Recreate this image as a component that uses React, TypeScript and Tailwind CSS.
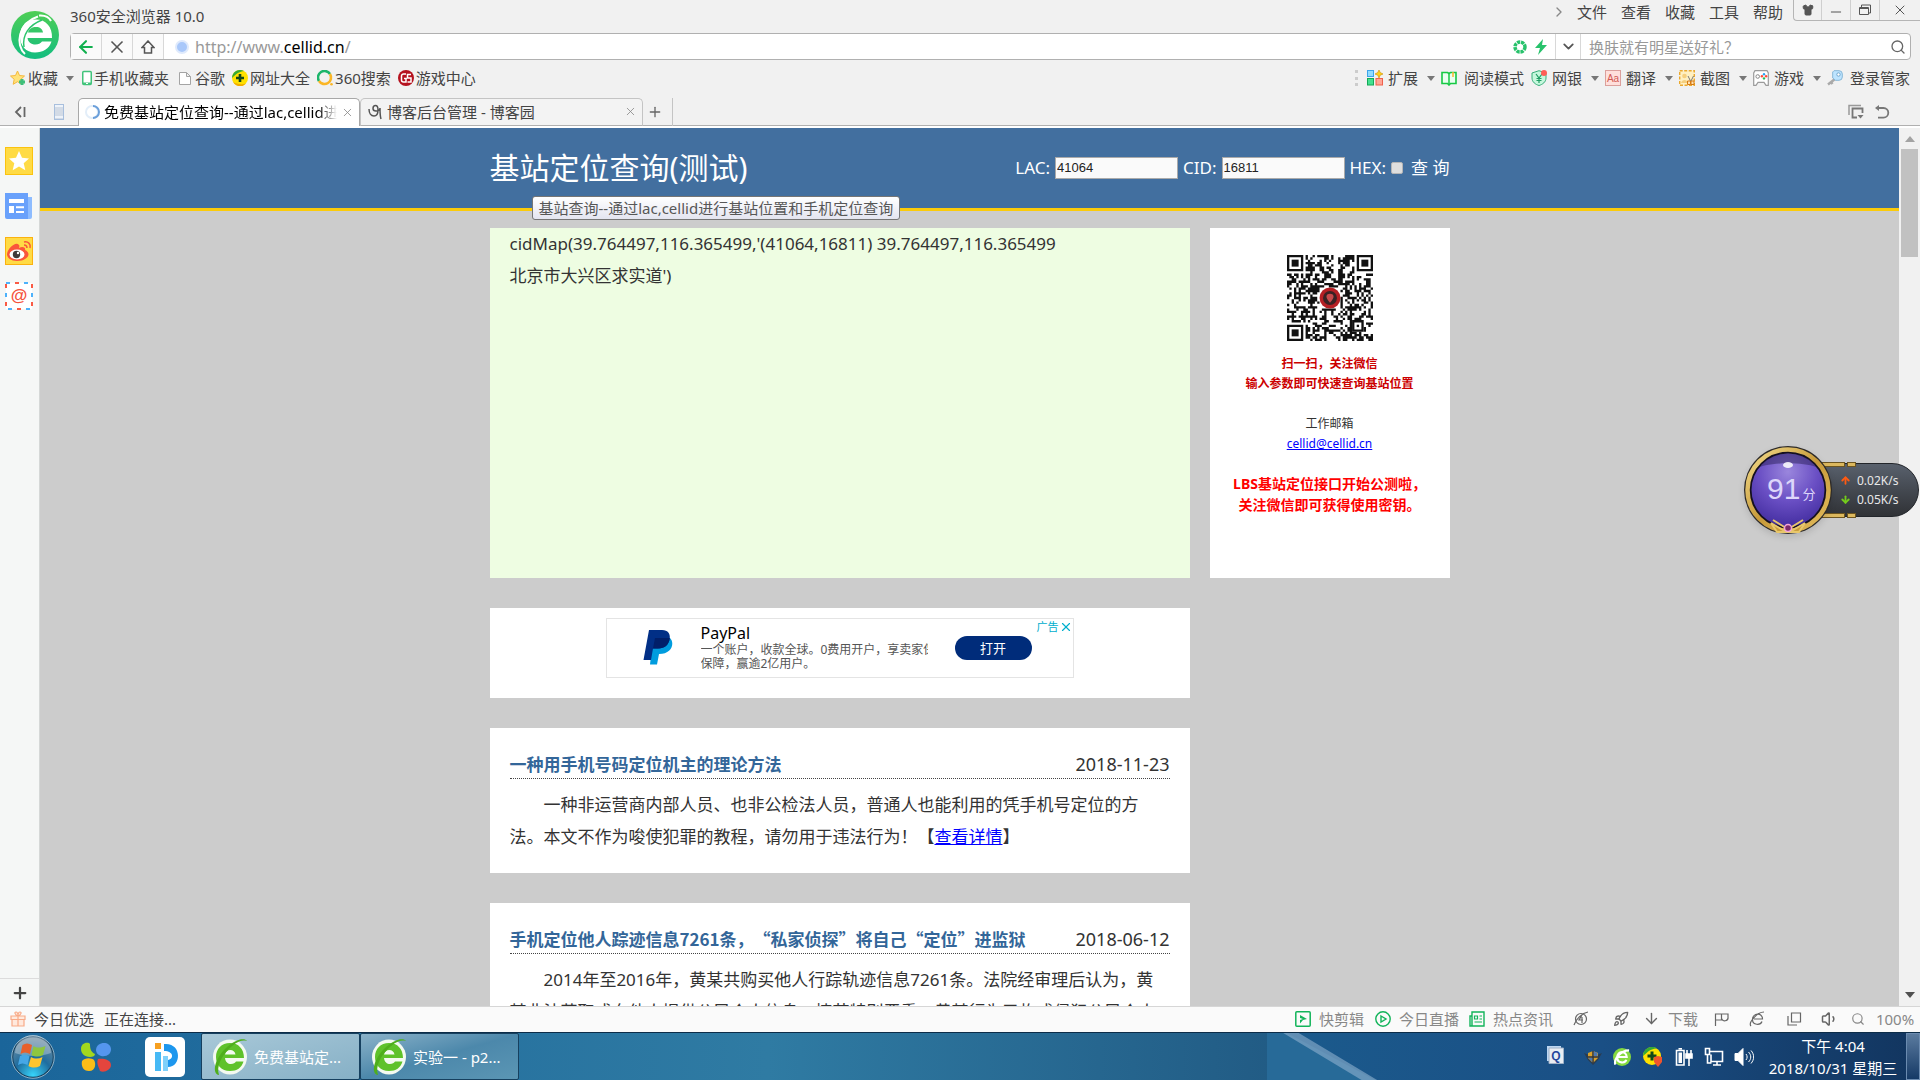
/**
 * 360 browser window on a Windows 7 desktop, showing the cellid.cn base station lookup page.
 */

import React from 'react';
import type { ReactNode } from 'react';
import {
  ArrowDown,
  ArrowLeft,
  ArrowUp,
  ChevronDown,
  ChevronRight,
  Copy,
  Minus,
  Plus,
  Rocket,
  Search,
  Shirt,
  Volume1,
  X,
} from 'lucide-react';

/* ---------- Icons ---------- */

function BrowserLogo() {
  return (
    <svg viewBox="0 0 48 48" className="size-12">
      <defs>
        <linearGradient id="logoGreen" x1="0" y1="0" x2="0" y2="1">
          <stop offset="0" stopColor="#4fce55" />
          <stop offset="1" stopColor="#12bd80" />
        </linearGradient>
      </defs>
      <circle cx="24" cy="24" r="24" fill="url(#logoGreen)" />
      <path
        d="M25 8.500c-9 0-16 6.500-16 16.500 0 10 6 16.500 15 16.500 8 0 14-3.500 16.500-11H31c-1.500 2-3.500 3-6.500 3-4.500 0-7.500-2.500-8-6.500h24.500C41.500 16 35 8.500 25 8.500zm0 7.500c4 0 6.500 2 7 5.500H17c1-3.500 4-5.500 8-5.500z"
        fill="#fff"
      />
      <path d="M14 43C4 34 7 12 27 5.500M28 4.500c6-.5 10 1.500 12 5.500" fill="none" stroke="#fff" strokeWidth="2" />
      <path d="M13 36C11 24 18 14 31 9" fill="none" stroke="#2cc56c" strokeWidth="1.500" />
    </svg>
  );
}

function StarPlusIcon() {
  return (
    <svg viewBox="0 0 16 16" className="size-4">
      <path d="M7.500 1l2 4.500 5 .5-3.700 3.300 1 5-4.300-2.600L3.200 14.300l1-5L.5 6l5-.5z" fill="#ffe27a" stroke="#f5b83d" />
      <path d="M12 9v6M9 12h6" stroke="#3fbf7a" strokeWidth="3" />
    </svg>
  );
}

function PhoneIcon() {
  return (
    <svg viewBox="0 0 10 16" className="h-4 w-[10px]">
      <rect x=".75" y="1.500" width="8.500" height="13" rx="1" fill="#fff" stroke="#41c47b" strokeWidth="1.500" />
      <path d="M1 12.500h8v2H1z" fill="#41c47b" />
      <path d="M4 13.500h2" stroke="#fff" />
    </svg>
  );
}

function DocIcon() {
  return (
    <svg viewBox="0 0 12 16" className="mr-[2px] ml-[3px] h-4 w-3">
      <path d="M.5 2.500h7l4 4v8H.5zM7.500 2.500v4h4" fill="#fff" stroke="#a4a4a4" />
    </svg>
  );
}

function PlusBallIcon() {
  return (
    <svg viewBox="0 0 16 16" className="size-4">
      <circle cx="8" cy="8" r="8" fill="#ffe100" />
      <path d="M0 8a8 8 0 0 1 12-6.900C5 2 3 6 0 8z" fill="#36a936" />
      <path d="M1 12a8 8 0 0 0 13 1.500C9 15 5 14 1 12z" fill="#f2ac00" />
      <path d="M8 4v8M4 8h8" stroke="#14471a" strokeWidth="2.600" />
    </svg>
  );
}

function RingIcon() {
  return (
    <svg viewBox="0 0 16 16" className="size-4">
      <path d="M2 11a6.300 6.300 0 0 1 11-7" fill="none" stroke="#1db56a" strokeWidth="2.600" />
      <path d="M13 4a6.300 6.300 0 0 1-11 7" fill="none" stroke="#fbb625" strokeWidth="2.600" />
      <circle cx="14.500" cy="14.300" r="1.300" fill="#fbb625" />
    </svg>
  );
}

function GameBadgeIcon() {
  return (
    <svg viewBox="0 0 16 16" className="size-4">
      <circle cx="8" cy="8" r="8" fill="#b5121e" />
      <path d="M8 4H5.500a2 2 0 0 0-2 2v4a2 2 0 0 0 2 2H8V8.500H6M13 4.500H9.500V8H13v4H9.500" fill="none" stroke="#fff" strokeWidth="1.500" />
    </svg>
  );
}

function AppsIcon() {
  return (
    <svg viewBox="0 0 16 16" className="size-4">
      <rect x=".5" y=".5" width="6" height="6" fill="#8fdcff" stroke="#3da4ea" />
      <rect x=".5" y="8.500" width="6" height="6.500" fill="#43e08f" stroke="#14a857" />
      <rect x="9" y="8.500" width="6.500" height="6.500" fill="#ffa596" stroke="#f0604a" />
      <path d="M12 0l1.200 2.500L16 4l-2.800 1.200L12 8l-1.200-2.800L8 4l2.800-1.500z" fill="#ffd21c" stroke="#c98b00" strokeWidth=".6" />
    </svg>
  );
}

function BookIcon() {
  return (
    <svg viewBox="0 0 16 16" className="size-4">
      <path d="M1 2.500h5.500L8 3.500l1.500-1H15v11H9.500L8 15l-1.500-1.500H1z" fill="#e9fff0" stroke="#16c944" strokeWidth="1.600" />
      <path d="M8 3.500V14" stroke="#16c944" strokeWidth="1.500" />
      <path d="M12 2v5" stroke="#ffb52e" strokeWidth="1.500" />
    </svg>
  );
}

function BankIcon() {
  return (
    <svg viewBox="0 0 16 16" className="size-4">
      <path d="M8 .7l7 2.300v5c0 4-3.500 6.500-7 7.500C4.500 14.500 1 12 1 8V3z" fill="#c5f7dc" stroke="#35ad78" />
      <path d="M5 4l3 4 3-4M8 8v5M5.500 8.500h5M5.500 10.500h5" fill="none" stroke="#1f9d63" strokeWidth="1.200" />
      <circle cx="13" cy="3" r="3" fill="#ff5d55" />
    </svg>
  );
}

function TranslateIcon() {
  return (
    <svg viewBox="0 0 16 16" className="size-4">
      <rect x=".5" y=".5" width="15" height="15" fill="#ffdfdb" stroke="#dba09c" />
      <text x="8" y="11.500" textAnchor="middle" fontSize="10" fontFamily="Liberation Sans, sans-serif" fill="#d15a54">
        Aa
      </text>
    </svg>
  );
}

function CaptureIcon() {
  return (
    <svg viewBox="0 0 16 16" className="size-4">
      <rect x=".7" y=".7" width="14.600" height="14.600" fill="#fff0c2" stroke="#eba82d" strokeWidth="1.400" strokeDasharray="3 1.500" />
      <circle cx="5.500" cy="6" r="2.300" fill="#f6cf7d" />
      <path d="M2 13c1-4 6-4 7 0z" fill="#f6cf7d" />
      <path d="M9 6l2.500 5M14.500 6L12 11" stroke="#777" />
      <path d="M8.500 11h3v3.500h-3zM12 11h3v3.500h-3z" fill="#ffe1ae" stroke="#d77a12" />
    </svg>
  );
}

function GamepadIcon() {
  return (
    <svg viewBox="0 0 16 16" className="size-4">
      <path d="M2 .7h12L15.300 3v12.300H13l-2-3H5l-2 3H.7V3z" fill="#fff" stroke="#9b9b9b" strokeWidth="1.200" />
      <circle cx="4.700" cy="6.500" r="1.800" fill="none" stroke="#888" />
      <circle cx="11" cy="4.200" r="1.200" fill="#28a3f5" />
      <circle cx="13.100" cy="6.300" r="1.200" fill="#ff4c36" />
      <circle cx="11" cy="8.400" r="1.200" fill="#23bb5b" />
      <circle cx="8.900" cy="6.300" r="1.200" fill="#ff4c36" />
    </svg>
  );
}

function KeyIcon() {
  return (
    <svg viewBox="0 0 16 16" className="size-4">
      <path d="M8 9l-7 5.500M4 12l1.500 2" stroke="#a9a9a9" strokeWidth="2.500" />
      <path d="M7 .7h5a3.300 3.300 0 0 1 3.300 3.300v3a3.300 3.300 0 0 1-3.300 3.300H8.500L5.700 8V2z" fill="#bde4ff" stroke="#87b7d8" />
      <circle cx="11.500" cy="4.500" r="1.700" fill="#fff" stroke="#6fa6cd" />
    </svg>
  );
}

function Spinner() {
  return (
    <svg viewBox="0 0 16 16" className="size-4 shrink-0">
      <circle cx="8" cy="8" r="6" fill="none" stroke="#e3eef9" strokeWidth="2" />
      <path d="M9 2a6 6 0 0 1 0 12" fill="none" stroke="#6b9fda" strokeWidth="2" />
    </svg>
  );
}

function GreenE() {
  return (
    <svg viewBox="0 0 38 38" className="size-[38px] shrink-0">
      <ellipse cx="19" cy="19" rx="17" ry="17.500" fill="#f4faf0" />
      <path
        d="M19 5c8.500 0 14 6 14 15H14c.5 4 3 6 6 6 2.500 0 4-1 5-2.500h7.500C30.500 30 26 33 19 33 10.500 33 5 27 5 19S10.500 5 19 5zm-5 11.500h10.500C24 13.500 22 12 19.300 12S14.500 13.500 14 16.500z"
        fill="#5fc22a"
      />
      <path d="M8 37C1 36 3 22 14 11S34 0 36 3c-7-2-13 3-19 9S5 28 8 37z" fill="#4fae1c" />
    </svg>
  );
}

function StartOrb() {
  return (
    <svg viewBox="0 0 44 44" className="size-11">
      <defs>
        <radialGradient id="orb" cx=".5" cy=".95" r=".9">
          <stop offset="0" stopColor="#37d5fb" />
          <stop offset=".5" stopColor="#1f6d9f" />
          <stop offset="1" stopColor="#6d8ba0" />
        </radialGradient>
      </defs>
      <circle cx="22" cy="22" r="20.500" fill="url(#orb)" stroke="#15415f" strokeWidth="1.500" />
      <circle cx="22" cy="22" r="21.300" fill="none" stroke="#8fb3c9" />
      <path d="M4 18A18 18 0 0 1 40 18C30 22 14 22 4 18z" fill="#fff" opacity=".3" />
      <path d="M11.500 10c3-2 6-2 9.500 0l-2 9c-3.500-2-6.500-2-9.500 0z" fill="#e8602a" />
      <path d="M22.500 11c3.500 2 6.500 2 12 0l-2.500 9c-4 2-7.500 2-11.500 0z" fill="#8ec63f" />
      <path d="M9 21c3-2 6-2 9.500 0l-2 9c-3.500-2-6.500-2-9.500 0z" fill="#46a7e6" />
      <path d="M20 22c3.500 2 7.500 2 11.500 0l-2.500 9c-4 2-7.500 2-11.500 0z" fill="#fdc52f" />
    </svg>
  );
}

function PetalsIcon() {
  return (
    <svg viewBox="0 0 30 30" className="size-[30px]">
      <path d="M0 7c0-5 4-7 8-6l1 1c0 5 1 8 5 10 0 2-2 3-5 3-6 0-9-4-9-8z" fill="#a3d81e" />
      <path d="M15 8c0-8 14-10 15-1 0 5-4 8-10 7-3-1-5-3-5-6z" fill="#5596ee" />
      <path d="M1 19c3-4 10-3 12-1 2 3 2 11-5 11-6 0-8-5-7-10z" fill="#fbbd17" />
      <path d="M17 17c4-1 13 0 13 6 0 5-7 8-11 6-1-4-4-7-2-12z" fill="#e4453d" />
    </svg>
  );
}

function PIcon() {
  return (
    <svg viewBox="0 0 40 40" className="size-10">
      <rect width="40" height="40" rx="5" fill="#fff" />
      <rect x="10" y="6" width="6" height="6" fill="#f7a020" />
      <rect x="10" y="15" width="6" height="19" fill="#46b9f5" />
      <path d="M19 7c18-2 18 23 4 23v-7c6-1 6-9-4-9z" fill="#1d97ee" />
      <rect x="18" y="19" width="5" height="15" fill="#7fd0fa" />
    </svg>
  );
}

/* ---------- QR code ---------- */

const QR_SIZE = 37;
const QR_FINDERS = [
  [0, 0],
  [QR_SIZE - 7, 0],
  [0, QR_SIZE - 7],
];

function buildQrPath() {
  let seed = 41064;
  let path = '';
  for (let y = 0; y < QR_SIZE; y++) {
    for (let x = 0; x < QR_SIZE; x++) {
      seed = (seed * 1103515245 + 12345) % 2147483648;
      const nearFinder = (x < 8 && y < 8) || (x > QR_SIZE - 9 && y < 8) || (x < 8 && y > QR_SIZE - 9);
      const nearAlign = Math.abs(x - 30) < 3 && Math.abs(y - 30) < 3;
      const nearLogo = Math.abs(x - 18) < 5 && Math.abs(y - 18) < 5;
      if (nearFinder || nearAlign || nearLogo) continue;
      if ((seed >> 12) % 100 < 52) path += `M${x} ${y}h1v1h-1z`;
    }
  }
  return path;
}

function QrCode() {
  return (
    <svg viewBox="0 0 37 37" className="size-[86px]">
      <path d={buildQrPath()} fill="#111" />
      {QR_FINDERS.map(([x, y]) => (
        <g key={`${x}-${y}`}>
          <path d={`M${x + 0.5} ${y + 0.5}h6v6h-6z`} fill="none" stroke="#111" />
          <path d={`M${x + 2} ${y + 2}h3v3h-3z`} fill="#111" />
        </g>
      ))}
      <path d="M28.500 28.500h4v4h-4z" fill="none" stroke="#111" />
      <path d="M30 30h1v1h-1z" fill="#111" />
      <circle cx="18.500" cy="18.500" r="4.500" fill="#b51f24" />
      <circle cx="18.500" cy="18.500" r="3" fill="#3a2224" />
      <path d="M18.500 20.500c-2.500-2.500-1.500-3.800 0-3.800s2.500 1.300 0 3.800z" fill="#c64a4c" />
    </svg>
  );
}

/* ---------- Browser chrome ---------- */

function Caret() {
  return <span className="mx-px border-x-[4px] border-t-[5px] border-x-transparent border-t-[#777]" />;
}

function BookmarkLink({ icon, label }: { icon: ReactNode; label: string }) {
  return (
    <a href="#" className="flex items-center gap-[2px]">
      {icon}
      {label}
    </a>
  );
}

function ToolButton({ icon, label }: { icon: ReactNode; label: string }) {
  return (
    <button className="flex items-center gap-[5px]">
      {icon}
      {label}
      <span className="flex pl-[3px]">
        <Caret />
      </span>
    </button>
  );
}

function TitleBar() {
  return (
    <div className="flex h-[33px] items-start pl-[70px]">
      <span className="pt-[6px] leading-5">360安全浏览器 10.0</span>
      <nav className="ml-auto flex items-center gap-[14px] pt-[2px] pr-[10px] leading-5">
        <ChevronRight size={16} className="-mr-1 text-[#888]" />
        <button>文件</button>
        <button>查看</button>
        <button>收藏</button>
        <button>工具</button>
        <button>帮助</button>
      </nav>
      <div className="flex h-[21px] divide-x divide-[#cfcfcf] rounded-bl border-b border-l border-[#b5b5b5]">
        <button aria-label="皮肤" className="flex w-7 items-center justify-center">
          <Shirt size={12} fill="#555" className="text-[#555]" />
        </button>
        <button aria-label="最小化" className="flex w-[29px] items-end justify-center">
          <Minus size={16} strokeWidth={1.500} className="text-[#555]" />
        </button>
        <button aria-label="还原" className="flex w-[29px] items-center justify-center">
          <svg viewBox="0 0 12 12" className="size-3">
            <path d="M2.500 3V1h9v8h-2M.5 3.500h9v7h-9zM.5 4.500h9" fill="none" stroke="#555" />
          </svg>
        </button>
        <button aria-label="关闭" className="flex w-10 items-center justify-center">
          <X size={16} strokeWidth={1.500} className="text-[#555]" />
        </button>
      </div>
    </div>
  );
}

function AddressBar() {
  return (
    <div className="mr-[9px] ml-[70px] flex h-[27px] divide-x divide-[#d8d8d8] rounded border border-[#b0b0b0] bg-white">
      <button aria-label="后退" className="flex w-[31px] items-center justify-center bg-[#fafafa]">
        <ArrowLeft size={20} strokeWidth={2.500} className="text-[#12b04f]" />
      </button>
      <button aria-label="停止" className="flex w-[31px] items-center justify-center bg-[#fafafa]">
        <X size={20} strokeWidth={2} className="text-[#555]" />
      </button>
      <button aria-label="主页" className="flex w-[31px] items-center justify-center bg-[#fafafa]">
        <svg viewBox="0 0 14 14" className="size-[14px]">
          <path d="M7 1l6 6.500h-2.500V13h-7V7.500H1z" fill="none" stroke="#555" strokeWidth="1.500" />
        </svg>
      </button>
      <div className="flex flex-1 items-center pr-2 pl-[11px]">
        <span className="size-[14px] rounded-full border-2 border-[#dfeafc] bg-[#a9c8fa]" />
        <span className="flex-1 pl-[6px] text-[16px] text-[#999]">
          http://www.<span className="text-black">cellid.cn</span>/
        </span>
        <svg viewBox="0 0 14 14" className="size-[14px]">
          <circle cx="7" cy="7" r="5" fill="none" stroke="#27c26b" strokeWidth="3.500" strokeDasharray="3.200 .8" />
        </svg>
        <svg viewBox="0 0 12 16" className="ml-2 h-4 w-3">
          <path d="M8 0L0 9h5l-2 7 9-10H7z" fill="#27c26b" />
        </svg>
      </div>
      <button aria-label="展开地址" className="flex w-[25px] items-center justify-center">
        <ChevronDown size={17} strokeWidth={2.500} className="text-[#555]" />
      </button>
      <div className="flex w-[329px] items-center pr-[4px] pl-2">
        <input
          aria-label="搜索"
          placeholder="换肤就有明星送好礼？"
          className="min-w-0 flex-1 outline-none placeholder:text-[#999]"
        />
        <Search size={16} className="text-[#666]" />
      </div>
    </div>
  );
}

function BookmarkBar() {
  return (
    <div className="flex h-9 items-center justify-between px-[10px]">
      <div className="flex items-center gap-[7px]">
        <BookmarkLink icon={<StarPlusIcon />} label="收藏" />
        <Caret />
        <BookmarkLink icon={<PhoneIcon />} label="手机收藏夹" />
        <BookmarkLink icon={<DocIcon />} label="谷歌" />
        <BookmarkLink icon={<PlusBallIcon />} label="网址大全" />
        <BookmarkLink icon={<RingIcon />} label="360搜索" />
        <BookmarkLink icon={<GameBadgeIcon />} label="游戏中心" />
      </div>
      <div className="flex items-center gap-[5px]">
        <span className="mr-1 h-4 border-l-[3px] border-dotted border-[#ccc]" />
        <ToolButton icon={<AppsIcon />} label="扩展" />
        <button className="mr-[2px] flex items-center gap-[7px]">
          <BookIcon />
          阅读模式
        </button>
        <ToolButton icon={<BankIcon />} label="网银" />
        <ToolButton icon={<TranslateIcon />} label="翻译" />
        <ToolButton icon={<CaptureIcon />} label="截图" />
        <ToolButton icon={<GamepadIcon />} label="游戏" />
        <button className="flex items-center gap-[7px]">
          <KeyIcon />
          登录管家
        </button>
      </div>
    </div>
  );
}

function TabBar() {
  return (
    <div className="flex h-8 items-end border-b-2 border-white">
      <div className="flex h-7 w-[78px] items-center justify-between border-b border-[#b0b0b0] px-[14px]">
        <svg viewBox="0 0 12 12" className="size-3">
          <path d="M7 1L2 6l5 5M10.500 1v10" fill="none" stroke="#666" strokeWidth="1.800" />
        </svg>
        <svg viewBox="0 0 10 16" className="h-4 w-[10px]">
          <rect x=".5" y=".5" width="9" height="15" fill="#d3dbe6" stroke="#a8bfdd" />
          <path d="M1 2h8M1 13h8" stroke="#eef3fa" strokeWidth="2" />
        </svg>
      </div>
      <div className="flex h-7 w-[282px] items-center rounded-t-[5px] border border-b-0 border-[#a8a8a8] bg-white px-[5px] pb-px text-black">
        <Spinner />
        <span className="ml-1 min-w-0 flex-1 overflow-hidden mask-r-from-92% whitespace-nowrap">
          免费基站定位查询--通过lac,cellid进行
        </span>
        <button aria-label="关闭标签" className="ml-1">
          <X size={13} strokeWidth={1.500} className="text-[#888]" />
        </button>
      </div>
      <div className="flex h-7 w-[283px] items-center rounded-t-[5px] border border-[#c4c4c4] border-b-[#b0b0b0] bg-[#f3f3f3] pr-[5px] pb-px pl-[7px]">
        <svg viewBox="0 0 14 16" className="h-4 w-[14px]">
          <path
            d="M1 5c0 4 2 7 5 7 2 0 4-2 4-6 0-3-1-4.500-2.500-4.500S5 3 5 4.500 6.500 7 8 7s4-1 4-3c0 4 0 8 1 11"
            fill="none"
            stroke="#555"
            strokeWidth="1.500"
          />
        </svg>
        <span className="ml-[5px] flex-1">博客后台管理 - 博客园</span>
        <button aria-label="关闭标签">
          <X size={13} strokeWidth={1.500} className="text-[#888]" />
        </button>
      </div>
      <div className="flex h-7 flex-1 items-center justify-between border-b border-[#b0b0b0] pr-[30px]">
        <button aria-label="新标签" className="flex h-7 w-[30px] items-center border-r border-[#c4c4c4] pl-1">
          <Plus size={16} className="text-[#666]" />
        </button>
        <div className="flex gap-[10px]">
          <svg viewBox="0 0 16 16" className="size-4">
            <path d="M1 11V1.500h12" fill="none" stroke="#999" strokeWidth="1.500" />
            <path d="M9 13.500H4.500v-9h10V9" fill="none" stroke="#777" strokeWidth="1.800" />
            <path d="M9.500 11h6L12.500 14.500z" fill="#777" />
          </svg>
          <svg viewBox="0 0 16 16" className="size-4">
            <path d="M5 1v6L1 4z" fill="#777" />
            <path d="M3 4h6.500a4.800 4.800 0 0 1 0 9.600H4" fill="none" stroke="#777" strokeWidth="1.800" />
          </svg>
        </div>
      </div>
    </div>
  );
}

function SideBar() {
  return (
    <aside className="flex w-10 shrink-0 flex-col border-r border-[#d5d8d7] bg-[#f5f7f6]">
      <div className="flex flex-col gap-[17px] pt-[19px] pl-[5px]">
        <svg viewBox="0 0 28 28" className="size-7">
          <rect x=".5" y=".5" width="27" height="27" fill="#ffdb45" stroke="#fbc30f" />
          <path d="M14 4l3 6.800 7 .7-5.300 4.800 1.600 7L14 19.600l-6.300 3.700 1.600-7L4 11.500l7-.7z" fill="#fff" />
        </svg>
        <svg viewBox="0 0 28 28" className="size-7">
          <path d="M22 5h5v20a2 2 0 0 1-2 2h-4z" fill="#8dbcff" />
          <path d="M0 1h23v26H2a2 2 0 0 1-2-2z" fill="#69a1fb" />
          <path d="M4 9h15" stroke="#fff" strokeWidth="4" />
          <path d="M4 14h5v7H4z" fill="#fff" />
          <path d="M11 15.300h8M11 20h8" stroke="#fff" strokeWidth="2" />
        </svg>
        <svg viewBox="0 0 28 28" className="size-7">
          <rect x=".5" y=".5" width="27" height="27" fill="#ffdb45" stroke="#fbb20f" />
          <path d="M2 17C3 11 11 4 14 8c1 1 0 2 0 3 3-2 7-1 6 2 7 3 3 11-8 11C6 24 2 21 2 17z" fill="#fa563b" />
          <ellipse cx="12" cy="17.500" rx="7.500" ry="5" fill="#fff" />
          <circle cx="11.500" cy="17.500" r="3.700" fill="#403b3a" />
          <circle cx="13" cy="16" r="1.200" fill="#fff" />
          <path d="M19 5c4-1 7 2 6 6M19 8c2 0 3 1 3 3" fill="none" stroke="#fa563b" strokeWidth="1.500" />
        </svg>
        <svg viewBox="0 0 28 28" className="size-7">
          <rect x="1" y="1" width="26" height="26" fill="#fff" />
          <rect x="1" y="1" width="26" height="26" fill="none" stroke="#4db2fb" strokeWidth="2" strokeDasharray="4 14" />
          <rect x="1" y="1" width="26" height="26" fill="none" stroke="#fa5a44" strokeWidth="2" strokeDasharray="4 14" strokeDashoffset="-9" />
          <text x="14" y="19" textAnchor="middle" fontSize="17" fontWeight="700" fontFamily="Liberation Sans, sans-serif" fill="#f5533e">
            @
          </text>
        </svg>
      </div>
      <button aria-label="添加" className="mt-auto flex h-7 items-center justify-center border-t border-[#dcdcdc]">
        <Plus size={18} strokeWidth={3} className="text-[#444]" />
      </button>
    </aside>
  );
}

function ScrollBar() {
  return (
    <div className="flex w-[21px] shrink-0 flex-col items-center bg-[#f1f1f1] py-2">
      <span className="border-x-[5px] border-b-[6px] border-x-transparent border-b-[#a3a3a3]" />
      <span className="mt-[7px] h-[108px] w-[17px] bg-[#c1c1c1]" />
      <span className="mt-auto border-x-[5px] border-t-[6px] border-x-transparent border-t-[#505050]" />
    </div>
  );
}

/* ---------- cellid.cn page ---------- */

function SiteHeader() {
  return (
    <header className="h-[83px] border-b-[3px] border-[#fbcb09] bg-[#426f9f] text-white">
      <div className="mx-auto flex h-20 w-[960px] items-center justify-between">
        <div className="relative">
          <h1 className="text-[30px] leading-10">基站定位查询(测试)</h1>
          <div className="absolute top-12 left-[42px] z-10 rounded-[3px] border border-[#767676] bg-linear-to-b from-white to-[#e4e5f0] px-[6px] text-[15px] leading-[22px] whitespace-nowrap text-[#575757]">
            基站查询--通过lac,cellid进行基站位置和手机定位查询
          </div>
        </div>
        <form className="flex items-center gap-[5px] text-[17px] leading-6">
          <label htmlFor="lac">LAC:</label>
          <input
            id="lac"
            defaultValue="41064"
            className="h-[22px] w-[123px] border border-[#aaa] bg-[#fafafa] px-px font-['Liberation_Sans',sans-serif] text-[13px] text-[#222]"
          />
          <label htmlFor="cid">CID:</label>
          <input
            id="cid"
            defaultValue="16811"
            className="h-[22px] w-[123px] border border-[#aaa] bg-[#fafafa] px-px font-['Liberation_Sans',sans-serif] text-[13px] text-[#222]"
          />
          <label htmlFor="hex">HEX:</label>
          <input id="hex" type="checkbox" className="size-3 appearance-none rounded-[2px] border border-[#b5b5b5] bg-[#dedede]" />
          <button type="button" className="ml-[3px]">
            查 询
          </button>
        </form>
      </div>
    </header>
  );
}

function AdCard() {
  return (
    <section className="h-[90px] bg-white pt-[10px]">
      <div className="mx-auto flex h-[60px] w-[468px] border border-[#e4e4e4]">
        <svg viewBox="0 0 30 36" className="mt-[10px] ml-9 h-9 w-[30px]">
          <path d="M10 9h17c5 5 2 16-11 16l-2 10.500H7z" fill="#009cde" />
          <path d="M6 1h13c6 0 9 4 7.500 10-1.500 6-6 8.500-12 8.500H10L8 31H.5z" fill="#012f86" />
          <path d="M12 9h14.800c-1 7-5 10.500-12 10.500H10z" fill="#011f69" />
        </svg>
        <div className="mt-1 ml-7 w-[227px] overflow-hidden">
          <p className="text-[16px] leading-5 text-black">PayPal</p>
          <p className="text-[12px] leading-[14px] whitespace-nowrap text-[#555]">
            一个账户，收款全球。0费用开户，享卖家保
            <br />
            保障，赢逾2亿用户。
          </p>
        </div>
        <button className="mt-[17px] ml-[27px] h-6 w-[77px] rounded-full bg-[#002c7a] text-[13px] leading-[22px] text-white">打开</button>
        <a href="#" className="ml-auto flex h-4 items-center text-[11px] leading-4 text-[#00aecd]">
          广告
          <X size={14} />
        </a>
      </div>
    </section>
  );
}

function Article({ title, date, children }: { title: string; date: string; children: ReactNode }) {
  return (
    <article className="bg-white p-5">
      <div className="flex h-[31px] justify-between border-b border-dotted border-[#444]">
        <h2 className="font-['Noto_Sans_CJK_SC',sans-serif] font-bold text-[#369] [text-spacing-trim:space-all]">{title}</h2>
        <time className="text-[18px]">{date}</time>
      </div>
      <p className="mt-[10px] indent-[34px] [text-spacing-trim:space-all]">{children}</p>
    </article>
  );
}

function SitePage() {
  return (
    <main className="min-w-0 flex-1 overflow-hidden bg-[#ccc]">
      <SiteHeader />
      <div className="mx-auto mt-[17px] grid w-[960px] grid-cols-[700px_240px] gap-x-5 gap-y-[30px] text-[17px] leading-8 text-[#333]">
        <section className="h-[350px] bg-[#eefde2] px-5">
          <p>cidMap(39.764497,116.365499,'(41064,16811) 39.764497,116.365499</p>
          <p>北京市大兴区求实道')</p>
        </section>
        <section className="flex flex-col items-center bg-white pt-[27px] text-center text-[12px] leading-5">
          <QrCode />
          <p className="mt-[13px] font-bold text-[#c00]">
            扫一扫，关注微信
            <br />
            输入参数即可快速查询基站位置
          </p>
          <p className="mt-5">工作邮箱</p>
          <a href="mailto:cellid@cellid.cn" className="text-[#00f] underline">
            cellid@cellid.cn
          </a>
          <p className="mt-[19px] text-[14px] leading-[21px] font-bold text-[#f00]">
            LBS基站定位接口开始公测啦，
            <br />
            关注微信即可获得使用密钥。
          </p>
        </section>
        <div className="flex flex-col gap-[30px]">
          <AdCard />
          <Article title="一种用手机号码定位机主的理论方法" date="2018-11-23">
            一种非运营商内部人员、也非公检法人员，普通人也能利用的凭手机号定位的方法。本文不作为唆使犯罪的教程，请勿用于违法行为！【
            <a href="#" className="text-[#00f] underline">
              查看详情
            </a>
            】
          </Article>
          <Article title="手机定位他人踪迹信息7261条，“私家侦探”将自己“定位”进监狱" date="2018-06-12">
            2014年至2016年，黄某共购买他人行踪轨迹信息7261条。法院经审理后认为，黄某非法获取或向他人提供公民个人信息，情节特别严重，黄某行为已构成侵犯公民个人信息罪。
          </Article>
        </div>
      </div>
    </main>
  );
}

/* ---------- Floating score widget ---------- */

function ScoreWidget() {
  return (
    <div className="absolute top-[445px] right-px flex items-center">
      <div className="relative z-10 size-[90px]">
        <svg viewBox="0 0 90 90" className="size-[90px] drop-shadow-md">
          <defs>
            <radialGradient id="gem" cx=".5" cy=".25" r=".8">
              <stop offset="0" stopColor="#9a86dd" />
              <stop offset=".5" stopColor="#6a4fc4" />
              <stop offset="1" stopColor="#3f2a9c" />
            </radialGradient>
            <linearGradient id="gold" x1="0" y1="0" x2="1" y2="1">
              <stop offset="0" stopColor="#f3dc8c" />
              <stop offset=".5" stopColor="#c79a3a" />
              <stop offset="1" stopColor="#e3bc5c" />
            </linearGradient>
          </defs>
          <circle cx="45" cy="45" r="44" fill="#2d2a28" />
          <circle cx="45" cy="45" r="40.500" fill="#15101f" stroke="url(#gold)" strokeWidth="4.500" />
          <circle cx="45" cy="45" r="36.500" fill="url(#gem)" />
          <path d="M17 22C27 4 63 4 73 22 60 17 30 17 17 22z" fill="#241a4d" opacity=".45" />
          <ellipse cx="45" cy="20" rx="5" ry="3" fill="#fff" opacity=".85" />
          <path d="M28 78l12 7h10l12-7-6 9H34zM30 75l13 8M60 75l-13 8" fill="#c99d3d" stroke="#e8c76b" strokeWidth="2" />
          <circle cx="45" cy="83" r="3.500" fill="#7c2a6b" stroke="#f4a6d8" strokeWidth="1.500" />
        </svg>
        <p className="absolute top-[28px] left-6 font-['Liberation_Sans','Noto_Sans_CJK_SC',sans-serif] text-[30px] leading-8 whitespace-nowrap text-[#ddd6fa]">
          91<span className="ml-[2px] text-[13px]">分</span>
        </p>
      </div>
      <div className="relative z-[1] -ml-3 flex h-14 w-9 flex-col justify-between">
        <span className="flex gap-[2px]">
          <span className="h-[5px] w-6 border border-[#6d5520] bg-[#dcb85e]" />
          <span className="h-[5px] w-[9px] border border-[#6d5520] bg-[#dcb85e]" />
        </span>
        <span className="flex gap-[2px]">
          <span className="h-[5px] w-6 border border-[#6d5520] bg-[#dcb85e]" />
          <span className="h-[5px] w-[9px] border border-[#6d5520] bg-[#dcb85e]" />
        </span>
      </div>
      <div className="-ml-9 flex h-[54px] w-[98px] flex-col justify-center rounded-r-full border border-[#22252a] bg-linear-to-b from-[#59616d] to-[#303236] pl-[18px] text-[12px] leading-[19px] text-[#e8e8e8]">
        <p className="flex items-center gap-[6px]">
          <ArrowUp size={11} strokeWidth={4} className="text-[#ff5a12]" />
          0.02K/s
        </p>
        <p className="flex items-center gap-[6px]">
          <ArrowDown size={11} strokeWidth={4} className="text-[#74cc1c]" />
          0.05K/s
        </p>
      </div>
    </div>
  );
}

/* ---------- Status bar and taskbar ---------- */

function StatusBar() {
  return (
    <footer className="flex h-[26px] shrink-0 items-center justify-between border-t border-[#d6d6d6] bg-[#fafafa] pr-[5px] pb-[2px] pl-[10px]">
      <div className="flex items-center">
        <svg viewBox="0 0 16 16" className="size-4">
          <path
            d="M1 5h14v3.500H1zM2 8.500h12V15H2zM8 5v10M8 5C5 4 4 1 6 1s2 3 2 4c0-1 0-4 2-4s1 3-2 4"
            fill="#ffe9dd"
            stroke="#f8ab88"
            strokeWidth="1.200"
          />
        </svg>
        <span className="ml-2">今日优选</span>
        <span className="ml-[10px]">正在连接...</span>
      </div>
      <div className="flex items-center text-[#888]">
        <a href="#" className="flex items-center gap-2">
          <svg viewBox="0 0 16 16" className="size-4">
            <rect x=".8" y=".8" width="14.400" height="14.400" rx="1" fill="none" stroke="#12b45a" strokeWidth="1.500" />
            <path d="M5 4l7 4-4 1-3 3.500V9l3-1-3-1z" fill="#12b45a" />
          </svg>
          快剪辑
        </a>
        <a href="#" className="ml-[11px] flex items-center gap-2">
          <svg viewBox="0 0 16 16" className="size-4">
            <circle cx="8" cy="8" r="7.200" fill="none" stroke="#12b45a" strokeWidth="1.400" />
            <path d="M6 5l5 3-5 3z" fill="none" stroke="#12b45a" strokeWidth="1.400" />
          </svg>
          今日直播
        </a>
        <a href="#" className="ml-[10px] flex items-center gap-2">
          <svg viewBox="0 0 16 16" className="size-4">
            <path d="M3 1h12v14H1V5h2zM3 5v10" fill="none" stroke="#12b45a" strokeWidth="1.400" />
            <path d="M5.500 5h3v3h-3zM10.500 5h2.500M10.500 8h2.500M5.500 11H13" fill="none" stroke="#12b45a" strokeWidth="1.200" />
          </svg>
          热点资讯
        </a>
        <button aria-label="加速" className="ml-5">
          <svg viewBox="0 0 16 16" className="size-4" fill="none" stroke="#666" strokeWidth="1.200">
            <circle cx="8" cy="8" r="5.500" />
            <path d="M1 14C3 8 9 2 15 1M9 4L6 9h4M9 6v6" />
          </svg>
        </button>
        <button aria-label="火箭" className="ml-6">
          <Rocket size={16} strokeWidth={2} className="text-[#666]" />
        </button>
        <button className="ml-[14px] flex items-center gap-2">
          <ArrowDown size={17} strokeWidth={2} className="text-[#666]" />
          下载
        </button>
        <button aria-label="旗帜" className="ml-4">
          <svg viewBox="0 0 16 16" className="size-4" fill="none" stroke="#666" strokeWidth="1.200">
            <path d="M1.500 15V3h6v6h-6M7.500 3H14v3a3 3 0 0 1-6.500 1" />
          </svg>
        </button>
        <button aria-label="内核" className="ml-[19px]">
          <svg viewBox="0 0 16 16" className="size-4" fill="none" stroke="#666" strokeWidth="1.200">
            <path d="M5 8h8.500c0-7-10-6-10 .5 0 6 8 6 9.500 2M2 15C-1 12 8 1 15 1" />
          </svg>
        </button>
        <button aria-label="窗口" className="ml-[21px]">
          <svg viewBox="0 0 16 16" className="size-4" fill="none" stroke="#666" strokeWidth="1.200">
            <path d="M5.500 2h9v9h-9zM2 5v9h9" />
          </svg>
        </button>
        <button aria-label="声音" className="ml-[19px]">
          <Volume1 size={18} strokeWidth={2} className="text-[#666]" />
        </button>
        <button className="ml-3 flex items-center gap-[10px]">
          <Search size={14} strokeWidth={2} />
          <span className="w-10">100%</span>
        </button>
      </div>
    </footer>
  );
}

function TaskButton({ label, active = false }: { label: string; active?: boolean }) {
  return (
    <button
      className={
        active
          ? 'flex h-[47px] w-[159px] items-center gap-[5px] rounded-[2px] border border-[#16405f] bg-linear-to-br from-[#a8c8d8] to-[#86b0c6] pl-[9px] text-white'
          : 'flex h-[47px] w-[159px] items-center gap-[5px] rounded-[2px] border border-[#16405f] bg-linear-to-br from-[#8ab2c9] via-[#4c88ab] to-[#5b96b4] pl-[9px] text-white'
      }
    >
      <GreenE />
      {label}
    </button>
  );
}

function Taskbar() {
  return (
    <div className="relative flex h-12 shrink-0 items-center overflow-hidden border-t border-[#0c2c48] bg-linear-to-r from-[#1a659a] via-[#2f7ba3] via-40% to-[#12355f] text-white">
      <div className="absolute inset-y-0 right-0 left-[67%] bg-linear-to-r from-[#1b5a8c] via-[#1a4f85] to-[#12355f]" />
      <svg viewBox="0 0 200 48" className="absolute top-0 left-[66%] h-12 w-[200px]" fill="none">
        <path d="M0 0h20l90 48H0z" fill="#276a98" />
        <path d="M14 -6L114 54" stroke="#8fb0cf" strokeWidth="8" opacity=".6" />
      </svg>
      <button aria-label="开始" className="ml-[11px]">
        <StartOrb />
      </button>
      <button aria-label="浏览器" className="ml-[26px]">
        <PetalsIcon />
      </button>
      <button aria-label="PP助手" className="ml-[34px]">
        <PIcon />
      </button>
      <div className="ml-4 flex">
        <TaskButton label="免费基站定..." active />
        <TaskButton label="实验一 - p2..." />
      </div>
      <div className="relative ml-auto flex items-center">
        <svg viewBox="0 0 18 22" className="h-[22px] w-[18px]">
          <path d="M1 0h14v15H1z" fill="#bcd6f2" />
          <path d="M3 2h14.500v15.500H3z" fill="#e8edf3" stroke="#9fb2c8" />
          <text x="10" y="13.500" textAnchor="middle" fontSize="12" fontWeight="700" fontFamily="Liberation Sans, sans-serif" fill="#24469c">
            Q
          </text>
        </svg>
        <svg viewBox="0 0 18 18" className="ml-5 size-[18px]">
          <path d="M0 5l5 2h8l5-2-4 7-5 5-5-5z" fill="#2b3c4f" />
          <path d="M9 3l5 2v5l-5 5-5-5V5z" fill="#d9a12b" />
          <path d="M9 3v12M4 9h10" stroke="#2c3440" strokeWidth="1.500" />
          <path d="M9.800 3.500L13.500 5v3H9.800zM4.500 10h3.700v4z" fill="#4a78b5" />
        </svg>
        <svg viewBox="0 0 38 38" className="ml-[11px] size-[18px]">
          <circle cx="19" cy="19" r="19" fill="#85d93f" />
          <path d="M10 19h19c-1-14-20-14-20 1 0 13 17 13 19 5M5 35C1 24 16 5 34 5" fill="none" stroke="#fff" strokeWidth="4.500" />
        </svg>
        <svg viewBox="0 0 20 20" className="ml-3 size-5">
          <circle cx="9" cy="9" r="9" fill="#ffe100" />
          <path d="M0 9a9 9 0 0 1 14-7.500C6 2 4 6 0 9z" fill="#36a936" />
          <path d="M9 4.500v9M4.500 9h9" stroke="#14471a" strokeWidth="3" />
          <path d="M11 10l4-1 4 1v5l-4 5-4-5z" fill="#f0542d" />
        </svg>
        <svg viewBox="0 0 20 20" className="ml-[11px] size-5" fill="none" stroke="#fff" strokeWidth="1.600">
          <path d="M2.500 3.500h7.500V18H2.500zM4.500 1.800h3.500" />
          <path d="M4.500 5.500H8V16H4.500z" fill="#fff" stroke="none" />
          <path d="M13 3v4M17 3v4M15 11v8" />
          <path d="M12 7h6v4h-6z" fill="#fff" />
        </svg>
        <svg viewBox="0 0 20 20" className="ml-[10px] size-5" fill="none" stroke="#fff" strokeWidth="1.600">
          <path d="M1.500 1.500h4v6h-4zM3.500 8v8h4M6 4.500h12.500v10H7v-7M9 18h8M13 15v3" />
        </svg>
        <svg viewBox="0 0 20 20" className="ml-[10px] size-5" fill="none" stroke="#fff">
          <path d="M1 6.500h3l5-5v17l-5-5H1z" fill="#fff" />
          <path d="M12 7c1.500 2 1.500 4 0 6M14.500 5c3 3 3 7 0 10M17 3.500c3.500 4 3.500 9 0 13" />
        </svg>
        <div className="ml-3 w-[134px] text-center leading-[22px]">
          <p>下午 4:04</p>
          <p>2018/10/31 星期三</p>
        </div>
        <button
          aria-label="显示桌面"
          className="ml-[6px] h-[47px] w-[14px] border border-[#6b8bb0] bg-linear-to-b from-[#5b7b9f] to-[#153a66]"
        />
      </div>
    </div>
  );
}

export default function App() {
  return (
    <div
      lang="zh-CN"
      className="relative flex h-screen flex-col overflow-hidden bg-[#f1f1f1] font-['Noto_Sans','Noto_Sans_CJK_SC',sans-serif] text-[15px] leading-5 text-[#444]"
    >
      <div className="relative">
        <div className="absolute top-[11px] left-[11px]">
          <BrowserLogo />
        </div>
        <TitleBar />
        <AddressBar />
        <BookmarkBar />
        <TabBar />
      </div>
      <div className="flex min-h-0 flex-1">
        <SideBar />
        <SitePage />
        <ScrollBar />
      </div>
      <StatusBar />
      <Taskbar />
      <ScoreWidget />
    </div>
  );
}
